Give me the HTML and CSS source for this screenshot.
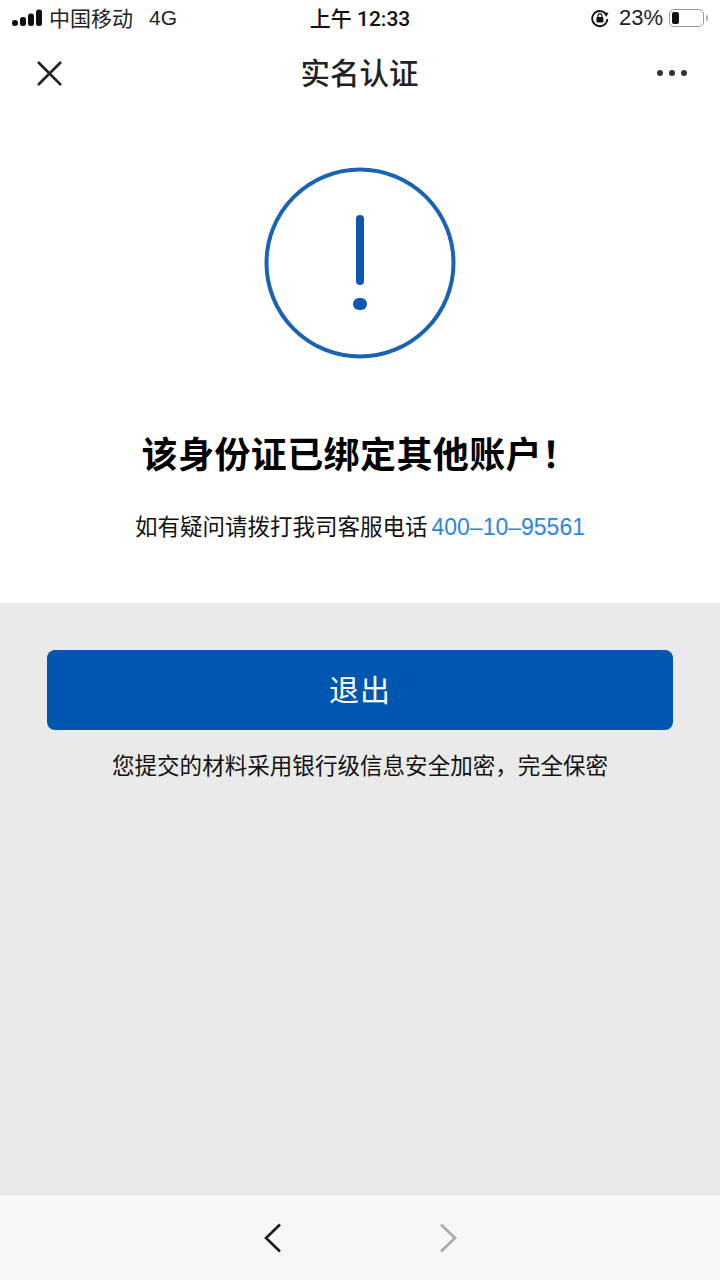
FILE: index.html
```html
<!DOCTYPE html>
<html lang="zh-CN">
<head>
  <meta charset="UTF-8">
  <meta name="viewport" content="width=device-width, initial-scale=1.0">
  <title>实名认证</title>
  <link rel="stylesheet" href="styles.css">
</head>
<body>
  <div class="phone">
    <!-- Status bar -->
    <div class="status-bar">
      <div class="status-left">
        <svg class="signal" width="30" height="18" viewBox="0 0 30 18">
          <rect x="0" y="11" width="6" height="6" rx="2.7" fill="#111"/>
          <rect x="8" y="8" width="6" height="9" rx="2.5" fill="#111"/>
          <rect x="16" y="4.5" width="6" height="12.5" rx="2.5" fill="#111"/>
          <rect x="24" y="0.5" width="6" height="16.5" rx="2.5" fill="#111"/>
        </svg>
        <span class="carrier">中国移动</span>
        <span class="network">4G</span>
      </div>
      <div class="status-time">上午 12:33</div>
      <div class="status-right">
        <svg class="lock" width="20" height="20" viewBox="0 0 20 20">
          <path d="M16.2 6.5A7.6 7.6 0 1 0 17.4 11" fill="none" stroke="#111" stroke-width="1.8"/>
          <path d="M13.8 7.6L18.6 7.6L16.2 3.4Z" fill="#111" transform="rotate(180 16.2 6.2)"/>
          <rect x="6.4" y="9" width="7" height="5.4" rx="1" fill="#111"/>
          <path d="M8 9V7.6a1.9 1.9 0 0 1 3.8 0V9" fill="none" stroke="#111" stroke-width="1.2"/>
        </svg>
        <span class="battery-text">23%</span>
        <div class="battery">
          <div class="battery-level"></div>
        </div>
        <div class="battery-tip"></div>
      </div>
    </div>

    <!-- Title bar -->
    <header class="title-bar">
      <svg class="close-icon" width="25" height="25" viewBox="0 0 25 25">
        <path d="M1 1L24 24M24 1L1 24" stroke="#222" stroke-width="2.6" fill="none"/>
      </svg>
      <h1 class="title">实名认证</h1>
      <div class="more-icon">
        <span class="dot"></span>
        <span class="dot"></span>
        <span class="dot"></span>
      </div>
    </header>

    <!-- Result -->
    <section class="result">
      <svg class="alert-icon" width="192" height="192" viewBox="0 0 192 192">
        <circle cx="96" cy="96" r="93.5" fill="none" stroke="#1a62b4" stroke-width="4"/>
        <path d="M96 52V114" stroke="#0b58b0" stroke-width="8" stroke-linecap="round" fill="none"/>
        <rect x="89" y="131" width="14" height="12" rx="6" fill="#0b58b0"/>
      </svg>
      <h2 class="result-title">该身份证已绑定其他账户！</h2>
      <p class="result-text">如有疑问请拨打我司客服电话<a class="phone-link">400–10–95561</a></p>
    </section>

    <!-- Action -->
    <section class="action">
      <button class="exit-btn"><span class="exit-label">退出</span></button>
      <p class="secure-note">您提交的材料采用银行级信息安全加密，完全保密</p>
    </section>

    <!-- Browser toolbar -->
    <footer class="toolbar">
      <svg width="18" height="30" viewBox="0 0 18 30">
        <path d="M16 1.5L2 15L16 28.5" fill="none" stroke="#1b1b1b" stroke-width="2.6"/>
      </svg>
      <svg width="18" height="30" viewBox="0 0 18 30">
        <path d="M2 1.5L16 15L2 28.5" fill="none" stroke="#aaa" stroke-width="2.6"/>
      </svg>
    </footer>
  </div>
</body>
</html>
```

FILE: styles.css
```css
/* General Styles */
html, body {
  margin: 0;
  padding: 0;
}
body {
  font-family: "Liberation Sans", "Noto Sans CJK SC", sans-serif;
  color: #111;
}
.phone {
  width: 720px;
  height: 1280px;
  display: flex;
  flex-direction: column;
  background: #fff;
  overflow: hidden;
}

/* Status bar */
.status-bar {
  height: 36px;
  padding: 0 12px 0 12px;
  display: flex;
  align-items: center;
  font-size: 21px;
}
.status-left {
  display: flex;
  align-items: center;
  flex: 1;
}
.carrier {
  margin: 0 0 3px 7px;
  color: #222;
}
.network {
  margin-left: 16px;
  color: #222;
}
.status-time {
  margin-bottom: 3px;
  font-family: Roboto, "Noto Sans CJK SC", sans-serif;
  font-size: 21px;
  font-weight: 500;
}
.status-right {
  flex: 1;
  display: flex;
  align-items: center;
  justify-content: flex-end;
}
.battery-text {
  margin-left: 9px;
  font-size: 22px;
  color: #222;
}
.battery {
  margin-left: 6px;
  width: 35px;
  height: 18px;
  border: 1.5px solid #999;
  border-radius: 5px;
  padding: 2px;
  box-sizing: border-box;
}
.battery-level {
  width: 7px;
  height: 100%;
  background: #111;
  border-radius: 2px;
}
.battery-tip {
  width: 2px;
  height: 6px;
  margin-left: 2px;
  background: #aaa;
  border-radius: 0 2px 2px 0;
}

/* Title bar */
.title-bar {
  height: 74px;
  padding: 0 33px 0 37px;
  display: flex;
  align-items: center;
  justify-content: space-between;
}
.title {
  margin: 0 0 4px;
  font-size: 29.5px;
  font-weight: 500;
  color: #222;
}
.more-icon {
  display: flex;
  gap: 6px;
  width: 30px;
}
.dot {
  width: 6px;
  height: 6px;
  border-radius: 50%;
  background: #333;
}

/* Result */
.result {
  height: 493px;
  display: flex;
  flex-direction: column;
  align-items: center;
  box-sizing: border-box;
  padding-top: 57px;
}
.alert-icon {
  filter: blur(0.5px);
}
.result-title {
  margin: 73px 0 0;
  font-size: 36px;
  line-height: 48px;
  font-weight: 700;
  letter-spacing: 0.4px;
  color: #000;
}
.result-text {
  margin: 32px 0 0;
  font-size: 22.5px;
  line-height: 30px;
  color: #111;
}
.phone-link {
  margin-left: 4px;
  color: #2a86e4;
  font-size: 23px;
}

/* Action */
.action {
  flex: 1;
  background: #eaeaea;
  padding: 47px 47px 0;
  text-align: center;
}
.exit-btn {
  display: block;
  width: 100%;
  height: 80px;
  border: none;
  border-radius: 8px;
  background: #0156b0;
  color: #fff;
  font-family: inherit;
  font-size: 30px;
  letter-spacing: 1px;
}
.exit-label {
  display: block;
  margin-bottom: 4px;
}
.secure-note {
  margin: 22px 0 0;
  font-size: 22.5px;
  line-height: 30px;
  letter-spacing: 0.05px;
  color: #111;
}

/* Browser toolbar */
.toolbar {
  height: 85px;
  border-top: 1px solid #ddd;
  background: #f7f7f7;
  display: flex;
  align-items: center;
  justify-content: center;
  gap: 157px;
}
```
